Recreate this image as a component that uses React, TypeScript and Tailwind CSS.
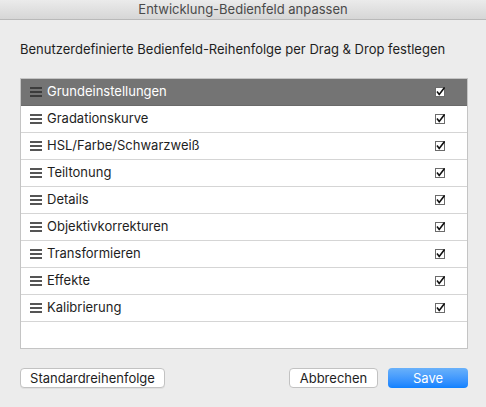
import React from "react";

const items = [
  "Grundeinstellungen",
  "Gradationskurve",
  "HSL/Farbe/Schwarzweiß",
  "Teiltonung",
  "Details",
  "Objektivkorrekturen",
  "Transformieren",
  "Effekte",
  "Kalibrierung",
];

function Burger({ dark }: { dark: boolean }) {
  return (
    <svg width="12" height="10" viewBox="0 0 12 10" className="shrink-0">
      <g fill={dark ? "#3c3c3c" : "#555555"}>
        <rect x="0" y="0" width="12" height="2" />
        <rect x="0" y="4" width="12" height="2" />
        <rect x="0" y="8" width="12" height="2" />
      </g>
    </svg>
  );
}

function Check() {
  return (
    <svg width="10" height="10" viewBox="0 0 10 10" className="shrink-0">
      <rect x="0.5" y="0.5" width="9" height="9" fill="#ffffff" stroke="#6b6b6b" strokeWidth="1" />
      <path d="M2 4.6 L4.2 7.4 L9.6 0.4" fill="none" stroke="#111111" strokeWidth="1.6" />
    </svg>
  );
}

export default function App() {
  return (
    <div
      className="w-[486px] h-[407px] bg-[#ececec] flex flex-col text-[13px] text-[#1e1e1e]"
      style={{ fontFamily: "Inter, 'Liberation Sans', sans-serif" }}
    >
      <div className="h-[20px] shrink-0 bg-gradient-to-b from-[#ebebeb] to-[#d6d6d6] border-b border-[#b9b9b9] flex items-center justify-center text-[#4a4a4a]">
        Entwicklung-Bedienfeld anpassen
      </div>
      <div className="px-[20px] pt-[20px] leading-[18px]">
        Benutzerdefinierte Bedienfeld-Reihenfolge per Drag &amp; Drop festlegen
      </div>
      <div className="mx-[20px] mr-[18px] mt-[20px] h-[271px] bg-white border border-[#c4c4c4] flex flex-col">
        {items.map((name, i) => (
          <div
            key={name}
            className={
              i === 0
                ? "h-[27px] shrink-0 flex items-center pl-[9px] pr-[22px] bg-[#747474] text-white border-b border-[#6a6a6a]"
                : "h-[27px] shrink-0 flex items-center pl-[9px] pr-[22px] border-b border-[#d5d5d5]"
            }
          >
            <Burger dark={i === 0} />
            <span className="ml-[5px] flex-1">{name}</span>
            <Check />
          </div>
        ))}
      </div>
      <div className="flex items-center px-[20px] pr-[18px] mt-[19px]">
        <button className="h-[20px] w-[145px] bg-white border border-[#c2c2c2] rounded-[4px] shadow-[0_1px_0_rgba(0,0,0,0.05)] text-[13px] leading-none">
          Standardreihenfolge
        </button>
        <div className="flex-1" />
        <button className="h-[20px] w-[89px] bg-white border border-[#c2c2c2] rounded-[4px] text-[13px] leading-none">
          Abbrechen
        </button>
        <button className="ml-[10px] h-[20px] w-[80px] rounded-[4px] bg-gradient-to-b from-[#69b1fa] to-[#0d81ff] text-white text-[13px] leading-none">
          Save
        </button>
      </div>
    </div>
  );
}
